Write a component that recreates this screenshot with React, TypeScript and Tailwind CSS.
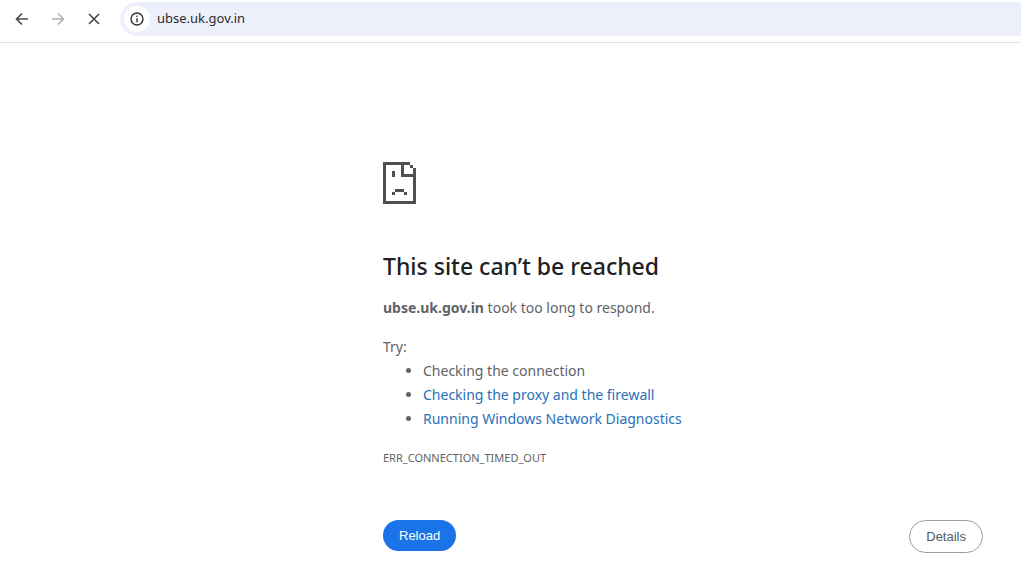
import type { ReactNode } from 'react'

const suggestions = [
  { label: 'Checking the connection' },
  { label: 'Checking the proxy and the firewall', href: '#buttons' },
  { label: 'Running Windows Network Diagnostics', href: '#diagnose' },
]

function ToolbarButton({ label, disabled, children }: { label: string; disabled?: boolean; children: ReactNode }) {
  return (
    <button
      type="button"
      aria-label={label}
      disabled={disabled}
      className="flex size-7 items-center justify-center rounded-full text-[#474747] disabled:text-[#b0b0b0]"
    >
      <svg viewBox="0 0 14 14" className="size-3.5" fill="none" stroke="currentColor" strokeWidth="1.6">
        {children}
      </svg>
    </button>
  )
}

function Toolbar() {
  return (
    <header className="flex items-start border-b border-[#dfe1e4] pt-0.5 pb-1.5">
      <nav className="flex gap-2 px-2 pt-[3px]">
        <ToolbarButton label="Back">
          <path d="M13 7H2M7 1.5 1.5 7 7 12.5" />
        </ToolbarButton>
        <ToolbarButton label="Forward" disabled>
          <path d="M1 7h11M7 1.5 12.5 7 7 12.5" />
        </ToolbarButton>
        <ToolbarButton label="Stop">
          <path d="m2 2 10 10m0-10-10 10" />
        </ToolbarButton>
      </nav>
      <div className="ml-1 flex h-[34px] flex-1 items-center rounded-l-full bg-[#edf0fa] pl-1">
        <button
          type="button"
          aria-label="View site information"
          className="flex size-[26px] items-center justify-center rounded-full bg-white text-[#333]"
        >
          <svg viewBox="0 0 14 14" className="size-3.5" fill="none" stroke="currentColor" strokeWidth="1.4">
            <circle cx="7" cy="7" r="6" />
            <path d="M7 6.2v4M7 3.6V5" />
          </svg>
        </button>
        <input
          type="text"
          aria-label="Address"
          defaultValue="ubse.uk.gov.in"
          className="min-w-0 flex-1 bg-transparent pl-[7px] text-[13px] text-[#2b2c30] outline-none"
        />
      </div>
    </header>
  )
}

function SadPage() {
  return (
    <svg viewBox="0 0 11 14" className="h-[42px] w-[33px]" fill="#505050" shapeRendering="crispEdges" aria-hidden="true">
      <path d="M0 0h9v1H0zM0 1h1v12H0zM0 13h11v1H0zM10 2h1v11h-1zM9 1h1v1H9zM6 1h1v3H6zM6 4h4v1H6z" />
      <path d="M3 3h1v2H3zM4 9h3v1H4zM3 10h1v1H3zM7 10h1v1H7z" />
    </svg>
  )
}

export default function App() {
  return (
    <div className="min-h-screen bg-white font-['Noto_Sans','Open_Sans',sans-serif]">
      <Toolbar />
      <main className="mr-[38px] ml-auto max-w-[600px] pt-[119px] text-sm leading-6 text-[#5f6368]">
        <SadPage />
        <h1 className="mt-12 text-[23px] leading-7 font-medium text-[#202124]">This site can’t be reached</h1>
        <p className="mt-4">
          <strong className="font-bold">ubse.uk.gov.in</strong> took too long to respond.
        </p>
        <p className="mt-[15px]">Try:</p>
        <ul className="list-disc pl-10">
          {suggestions.map(({ label, href }) => (
            <li key={label}>
              {href ? <a href={href} className="text-[#2a70b8]">{label}</a> : label}
            </li>
          ))}
        </ul>
        <p className="mt-[15px] text-[11px] leading-6">ERR_CONNECTION_TIMED_OUT</p>
        <div className="mt-[50px] flex items-start justify-between font-['Liberation_Sans',sans-serif] text-[13px] leading-[15px]">
          <button type="button" className="rounded-full bg-[#1a73e8] px-4 py-2 text-white">Reload</button>
          <button type="button" className="rounded-full border border-[#9a9da1] px-4 py-2 text-[#4f5b66]">Details</button>
        </div>
      </main>
    </div>
  )
}
